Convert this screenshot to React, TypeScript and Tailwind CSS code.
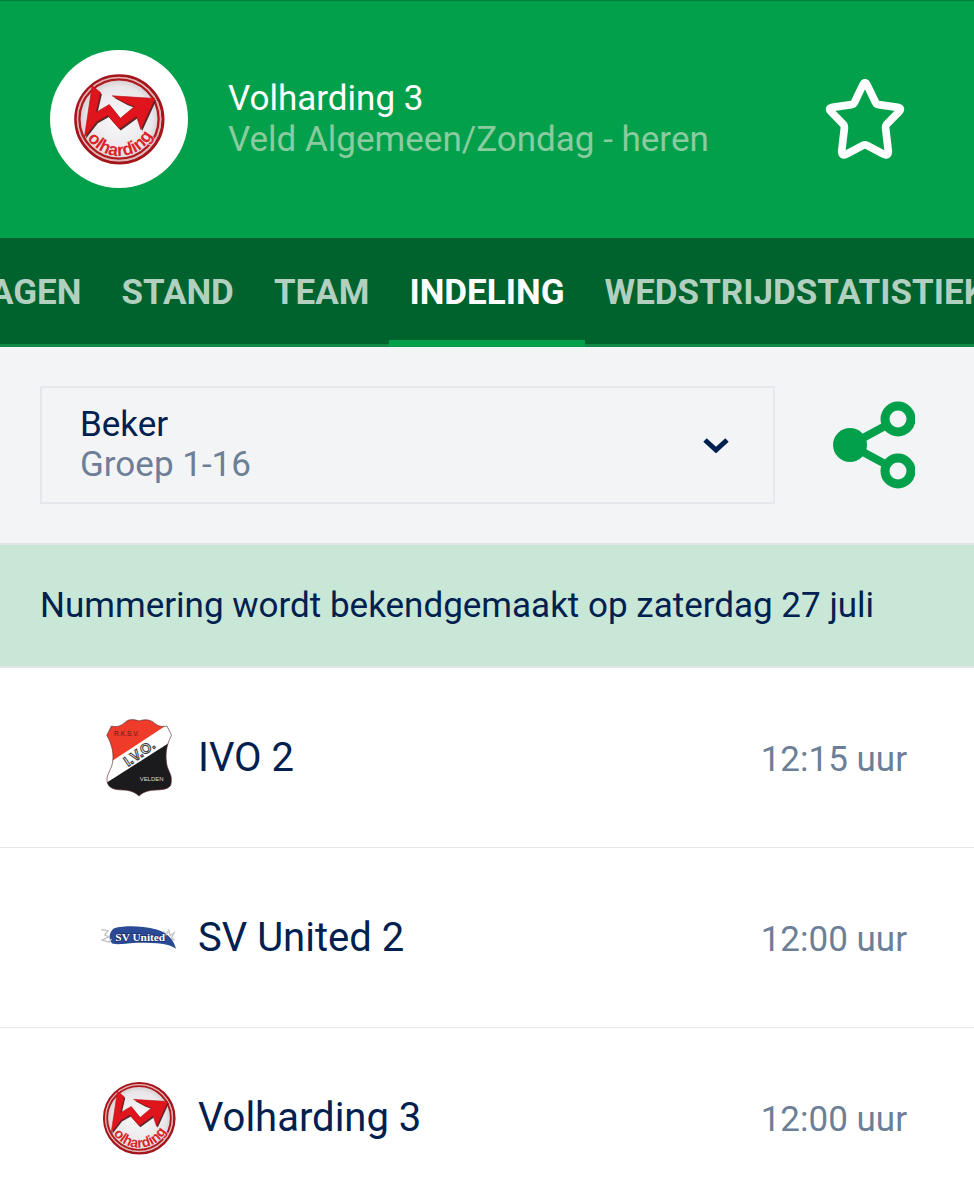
import { useLayoutEffect, useRef } from "react";
import type { ReactNode } from "react";

type Entry = {
  name: string;
  time: string;
  logo: ReactNode;
};

const TABS = ["UITSLAGEN", "STAND", "TEAM", "INDELING", "WEDSTRIJDSTATISTIEKEN"];
const ACTIVE_TAB = "INDELING";

function VolhardingLogo({ id, className }: { id: string; className: string }) {
  const mark =
    "M157 138 L182 158 L168 218 L208 194 L241 235 L283 200 L258 190 L217 168 L344 176 L302 268 L289 229 L238 266 L203 226 L170 245 L134 291 Z";
  return (
    <svg viewBox="100 100 274 274" className={className} role="img" aria-label="Volharding">
      <defs>
        <radialGradient id={`${id}-metal`}>
          <stop offset="0" stopColor="#fbfafb" />
          <stop offset="0.75" stopColor="#e9e7e9" />
          <stop offset="1" stopColor="#c9c2c4" />
        </radialGradient>
        <path id={`${id}-arc`} d="M138 286 A112 112 0 0 0 342 276" />
      </defs>
      <circle cx="238" cy="238" r="130" fill={`url(#${id}-metal)`} stroke="#a5161c" strokeWidth="9" />
      <circle cx="237" cy="237" r="124" fill="none" stroke="#e6b4b4" strokeWidth="4" />
      <circle cx="237" cy="237" r="118" fill="none" stroke="#b01a1e" strokeWidth="7" />
      <path d={mark} transform="translate(4 5)" fill="#55282a" />
      <path d={mark} fill="#e0141c" stroke="#b8141a" strokeWidth="2" />
      <text
        fontSize="52"
        fill="#d8242b"
        stroke="#f3e4e4"
        strokeWidth="3"
        paintOrder="stroke"
        className="font-['Liberation_Sans'] font-bold"
      >
        <textPath href={`#${id}-arc`} startOffset="10">
          olharding
        </textPath>
      </text>
    </svg>
  );
}

function IvoLogo() {
  const shield =
    "M64 60 C76 64 90 62 103 51 C114 40 126 38 147 45 C168 38 183 42 194 52 C205 62 220 63 231 60 L245 88 C228 120 225 150 232 182 C240 204 250 215 242 240 C222 264 178 240 147 271 C116 240 78 264 56 240 C42 218 58 200 65 180 C74 148 66 116 50 88 Z";
  return (
    <svg viewBox="30 30 234 250" className="h-[83px] w-[78px]" role="img" aria-label="I.V.O. Velden">
      <defs>
        <clipPath id="ivo-shield">
          <path d={shield} />
        </clipPath>
      </defs>
      <path d={shield} fill="#ffffff" />
      <g clipPath="url(#ivo-shield)">
        <path d="M30 30 H264 L232 56 L68 164 L30 190 Z" fill="#ef3b2a" />
        <path d="M264 94 L48 232 V290 H264 Z" fill="#1b1b1d" />
      </g>
      <path d={shield} fill="none" stroke="#5b2f30" strokeWidth="2" />
      <text x="72" y="91" fontSize="20" fill="#5c1713" className="font-['Liberation_Sans']">
        R.K.S.V.
      </text>
      <text
        x="114"
        y="183"
        fontSize="42"
        fill="#ffffff"
        stroke="#3a3a40"
        strokeWidth="3"
        transform="rotate(-35 114 183)"
        className="font-['Liberation_Sans'] font-bold"
      >
        I.V.O.
      </text>
      <text x="149" y="225" fontSize="18" fill="#d8d8d8" className="font-['Liberation_Sans']">
        VELDEN
      </text>
    </svg>
  );
}

function UnitedLogo() {
  return (
    <svg viewBox="30 40 234 80" className="h-[27px] w-[78px]" role="img" aria-label="SV United">
      <path
        d="M70 54 C86 44 150 42 200 56 C236 66 252 90 258 114 C236 98 200 96 150 96 C110 96 90 104 66 98 C54 84 58 66 70 54 Z"
        fill="#2b4a96"
      />
      <path d="M34 56 L54 60 L44 72 L56 78 L36 88 L58 94 L64 84" fill="none" stroke="#c3c3c9" strokeWidth="4" />
      <path d="M220 60 L228 72 L236 58 L240 74 L252 66 L244 82 L254 88" fill="none" stroke="#c3c3c9" strokeWidth="4" />
      <text
        x="76"
        y="91"
        fontSize="34"
        fill="#ffffff"
        stroke="#1c3272"
        strokeWidth="5"
        paintOrder="stroke"
        className="font-['Liberation_Serif'] font-bold"
      >
        SV United
      </text>
    </svg>
  );
}

function StarIcon() {
  return (
    <svg viewBox="45 57 240 240" className="size-20" aria-hidden="true">
      <path
        d="M159 74 Q165 62 171 74 L196 126 Q199 133 206 134 L263 142 Q277 145 267 155 L229 194 Q226 199 227 206 L235 274 Q235 289 222 283 L171 256 Q165 253 159 256 L108 283 Q95 289 95 274 L103 206 Q104 199 101 194 L63 155 Q53 145 67 142 L124 134 Q131 133 134 126 Z"
        fill="none"
        stroke="white"
        strokeWidth="23"
        strokeLinejoin="round"
      />
    </svg>
  );
}

function ShareIcon() {
  return (
    <svg viewBox="0 0 82 88" className="h-[88px] w-[82px]" fill="none" stroke="#03a04b" aria-hidden="true">
      <path d="M54 24 L17 44 L54 64" strokeWidth="8" />
      <circle cx="17" cy="44" r="17" fill="#03a04b" stroke="none" />
      <circle cx="65" cy="18" r="13" fill="#f2f4f6" strokeWidth="9" />
      <circle cx="65" cy="70" r="13" fill="#f2f4f6" strokeWidth="9" />
    </svg>
  );
}

function Tabs() {
  const navRef = useRef<HTMLElement>(null);
  const activeRef = useRef<HTMLAnchorElement>(null);

  // keep the active tab in the middle of the strip
  useLayoutEffect(() => {
    const nav = navRef.current;
    const tab = activeRef.current;
    if (!nav || !tab) return;
    nav.scrollLeft = tab.offsetLeft + tab.offsetWidth / 2 - nav.clientWidth / 2;
  }, []);

  return (
    <nav
      ref={navRef}
      className="relative flex overflow-x-auto bg-[#00622d] bg-[linear-gradient(#0f8a47,#0f8a47)] bg-[length:100%_3px] bg-bottom bg-no-repeat [scrollbar-width:none]"
    >
      {TABS.map((tab) => {
        const active = tab === ACTIVE_TAB;
        return (
          <a
            key={tab}
            ref={active ? activeRef : undefined}
            href="#"
            aria-current={active ? "page" : undefined}
            className={`shrink-0 border-b-[7px] px-5 pt-[35px] pb-[27px] leading-10 font-bold ${
              active ? "border-[#03a04b] text-white" : "border-transparent text-[#b2d0c0]"
            }`}
          >
            {tab}
          </a>
        );
      })}
    </nav>
  );
}

const ENTRIES: Entry[] = [
  { name: "IVO 2", time: "12:15 uur", logo: <IvoLogo /> },
  { name: "SV United 2", time: "12:00 uur", logo: <UnitedLogo /> },
  {
    name: "Volharding 3",
    time: "12:00 uur",
    logo: <VolhardingLogo id="row" className="size-[74px]" />,
  },
];

export default function App() {
  return (
    <div className="min-h-screen bg-white font-[Roboto,sans-serif] text-[35px] text-[#00204f]">
      <header className="flex items-center gap-10 border-t border-[#0a7a3c] bg-[#03a04b] pt-[49px] pr-[69px] pb-[50px] pl-[50px]">
        <div className="flex size-[138px] shrink-0 items-center justify-center rounded-full bg-white">
          <VolhardingLogo id="header" className="size-[92px]" />
        </div>
        <div className="min-w-0 flex-1 leading-[41px]">
          <h1 className="text-white">Volharding 3</h1>
          <p className="text-[#8acb9f]">Veld Algemeen/Zondag - heren</p>
        </div>
        <button type="button" aria-label="Favoriet">
          <StarIcon />
        </button>
      </header>

      <Tabs />

      <section className="flex items-center gap-[58px] border-b-2 border-[#e2e6ea] bg-[#f2f4f6] py-[39px] pr-[59px] pl-10">
        <div className="flex flex-1 items-center border-2 border-[#e4e7eb] py-[17px] pr-11 pl-[38px] leading-10">
          <div className="flex flex-1 flex-col">
            <label htmlFor="poule">Beker</label>
            <select id="poule" className="h-10 appearance-none bg-transparent text-[#6d7f96]">
              <option>Groep 1-16</option>
            </select>
          </div>
          <svg viewBox="0 0 26 16" className="h-4 w-[26px]" aria-hidden="true">
            <path d="M2 3 L13 13 L24 3" fill="none" stroke="#00204f" strokeWidth="5" />
          </svg>
        </div>
        <button type="button" aria-label="Delen">
          <ShareIcon />
        </button>
      </section>

      <p className="border-b-2 border-[#dfe8e6] bg-[#c9e7d7] px-10 pt-[41px] pb-10 leading-10">
        Nummering wordt bekendgemaakt op zaterdag 27 juli
      </p>

      <ul>
        {ENTRIES.map((entry) => (
          <li
            key={entry.name}
            className="flex h-[180px] items-center gap-5 border-b border-[#e6e9ec] pr-[67px] pl-[100px] last:border-b-0"
          >
            <div className="flex w-[78px] shrink-0 justify-center">{entry.logo}</div>
            <div className="flex flex-1 items-baseline justify-between">
              <span className="text-[40px]">{entry.name}</span>
              <span className="text-[#6d7f96]">{entry.time}</span>
            </div>
          </li>
        ))}
      </ul>
    </div>
  );
}
